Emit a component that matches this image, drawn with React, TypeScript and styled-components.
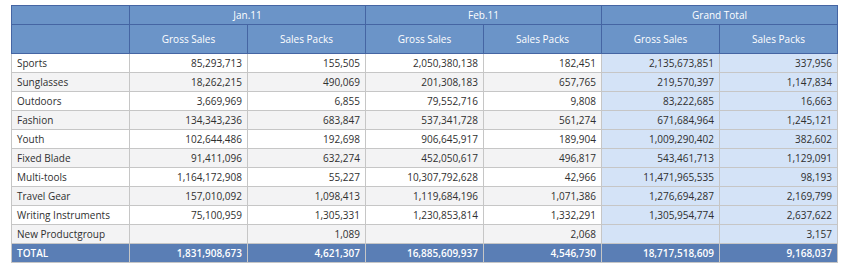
import React from "react";
import styled, { createGlobalStyle } from "styled-components";

const Global = createGlobalStyle`
  html, body { margin: 0; padding: 0; background: #ffffff; }
  body { font-family: "Open Sans", "Noto Sans", sans-serif; }
`;

const Wrap = styled.div`
  padding: 5px 0 0 11px;
`;

const Table = styled.table`
  border-collapse: collapse;
  table-layout: fixed;
  width: 827px;
  font-size: 10px;
  color: #2f2f2f;
`;

const HeadCell = styled.th<{ $tall?: boolean }>`
  background: #6b94c8;
  color: #ffffff;
  font-weight: 400;
  border: 1px solid #4565a3;
  height: ${(p) => (p.$tall ? "28px" : "18px")};
  padding: 0;
  text-align: center;
  font-size: 10px;
`;

const Row = styled.tr<{ $alt?: boolean }>`
  background: ${(p) => (p.$alt ? "#f3f3f4" : "#ffffff")};
`;

const LabelCell = styled.td`
  border: 1px solid #c6c6c6;
  height: 18px;
  padding: 0 5px;
  text-align: left;
  white-space: nowrap;
`;

const NumCell = styled.td<{ $grand?: boolean }>`
  border: 1px solid #c6c6c6;
  height: 18px;
  padding: 0 5px;
  text-align: right;
  white-space: nowrap;
  background: ${(p) => (p.$grand ? "#d4e3f7" : "transparent")};
`;

const TotalRow = styled.tr`
  background: #5a7eb5;
  color: #ffffff;
  font-weight: 600;
`;

const TotalCell = styled.td<{ $num?: boolean }>`
  border: 1px solid #c6c6c6;
  height: 18px;
  padding: 0 5px;
  text-align: ${(p) => (p.$num ? "right" : "left")};
  white-space: nowrap;
`;

type R = [string, string, string, string, string, string, string];

const rows: R[] = [
  ["Sports", "85,293,713", "155,505", "2,050,380,138", "182,451", "2,135,673,851", "337,956"],
  ["Sunglasses", "18,262,215", "490,069", "201,308,183", "657,765", "219,570,397", "1,147,834"],
  ["Outdoors", "3,669,969", "6,855", "79,552,716", "9,808", "83,222,685", "16,663"],
  ["Fashion", "134,343,236", "683,847", "537,341,728", "561,274", "671,684,964", "1,245,121"],
  ["Youth", "102,644,486", "192,698", "906,645,917", "189,904", "1,009,290,402", "382,602"],
  ["Fixed Blade", "91,411,096", "632,274", "452,050,617", "496,817", "543,461,713", "1,129,091"],
  ["Multi-tools", "1,164,172,908", "55,227", "10,307,792,628", "42,966", "11,471,965,535", "98,193"],
  ["Travel Gear", "157,010,092", "1,098,413", "1,119,684,196", "1,071,386", "1,276,694,287", "2,169,799"],
  ["Writing Instruments", "75,100,959", "1,305,331", "1,230,853,814", "1,332,291", "1,305,954,774", "2,637,622"],
  ["New Productgroup", "", "1,089", "", "2,068", "", "3,157"],
];

const total: R = ["TOTAL", "1,831,908,673", "4,621,307", "16,885,609,937", "4,546,730", "18,717,518,609", "9,168,037"];

export default function App() {
  return (
    <>
      <Global />
      <Wrap>
        <Table>
          <thead>
            <tr>
              <HeadCell />
              <HeadCell colSpan={2}>Jan.11</HeadCell>
              <HeadCell colSpan={2}>Feb.11</HeadCell>
              <HeadCell colSpan={2}>Grand Total</HeadCell>
            </tr>
            <tr>
              <HeadCell $tall />
              <HeadCell $tall>Gross Sales</HeadCell>
              <HeadCell $tall>Sales Packs</HeadCell>
              <HeadCell $tall>Gross Sales</HeadCell>
              <HeadCell $tall>Sales Packs</HeadCell>
              <HeadCell $tall>Gross Sales</HeadCell>
              <HeadCell $tall>Sales Packs</HeadCell>
            </tr>
          </thead>
          <tbody>
            {rows.map((r, i) => (
              <Row key={r[0]} $alt={i % 2 === 1}>
                <LabelCell>{r[0]}</LabelCell>
                {r.slice(1).map((v, j) => (
                  <NumCell key={j} $grand={j >= 4}>
                    {v}
                  </NumCell>
                ))}
              </Row>
            ))}
            <TotalRow>
              <TotalCell>{total[0]}</TotalCell>
              {total.slice(1).map((v, j) => (
                <TotalCell key={j} $num>
                  {v}
                </TotalCell>
              ))}
            </TotalRow>
          </tbody>
        </Table>
      </Wrap>
    </>
  );
}
